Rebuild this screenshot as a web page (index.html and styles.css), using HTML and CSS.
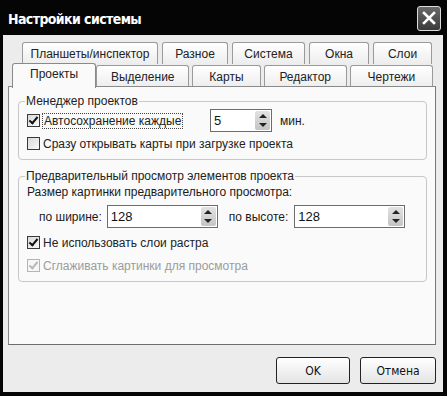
FILE: index.html
```html
<!DOCTYPE html>
<html lang="ru">
<head>
    <meta charset="UTF-8">
    <title>Настройки системы</title>
    <link rel="stylesheet" href="styles.css">
</head>
<body>
    <div class="window">
        <div class="title-bar">
            <span class="title">Настройки системы</span>
            <span class="close-btn">
                <svg width="14" height="14" viewBox="0 0 14 14"><path d="M2 2 L12 12 M12 2 L2 12" stroke="#fff" stroke-width="2.6" stroke-linecap="square"/></svg>
            </span>
        </div>
        <div class="client">
            <div class="tabs">
                <div class="tab-row back">
                    <div class="tab w-plan">Планшеты/инспектор</div>
                    <div class="tab w-misc">Разное</div>
                    <div class="tab w-sys">Система</div>
                    <div class="tab w-win">Окна</div>
                    <div class="tab w-layers">Слои</div>
                </div>
                <div class="tab-row front">
                    <div class="tab active w-proj">Проекты</div>
                    <div class="tab w-sel">Выделение</div>
                    <div class="tab w-maps">Карты</div>
                    <div class="tab w-edit">Редактор</div>
                    <div class="tab w-draw">Чертежи</div>
                </div>
            </div>
            <div class="panel">
                <fieldset class="group group-manager">
                    <legend>Менеджер проектов</legend>
                    <div class="row">
                        <label class="check autosave">
                            <span class="box checked"></span>
                            <span class="focus">Автосохранение каждые</span>
                        </label>
                        <div class="spin spin-small">
                            <span class="spin-value">5</span>
                            <span class="spin-btns"><span class="arr up"></span><span class="arr down"></span></span>
                        </div>
                        <span class="unit">мин.</span>
                    </div>
                    <label class="check">
                        <span class="box"></span>
                        <span>Сразу открывать карты при загрузке проекта</span>
                    </label>
                </fieldset>

                <fieldset class="group group-preview">
                    <legend>Предварительный просмотр элементов проекта</legend>
                    <div class="caption">Размер картинки предварительного просмотра:</div>
                    <div class="row size-row">
                        <span class="field-label">по ширине:</span>
                        <div class="spin spin-wide">
                            <span class="spin-value">128</span>
                            <span class="spin-btns"><span class="arr up"></span><span class="arr down"></span></span>
                        </div>
                        <span class="field-label second">по высоте:</span>
                        <div class="spin spin-wide">
                            <span class="spin-value">128</span>
                            <span class="spin-btns"><span class="arr up"></span><span class="arr down"></span></span>
                        </div>
                    </div>
                    <label class="check">
                        <span class="box checked"></span>
                        <span>Не использовать слои растра</span>
                    </label>
                    <label class="check disabled">
                        <span class="box checked"></span>
                        <span>Сглаживать картинки для просмотра</span>
                    </label>
                </fieldset>
            </div>
            <div class="buttons">
                <button class="btn">OK</button>
                <button class="btn">Отмена</button>
            </div>
        </div>
    </div>
</body>
</html>
```

FILE: styles.css
```css
/* Dialog frame */
body {
    margin: 0;
    background: #000;
    font-family: 'Liberation Sans', Arial, sans-serif;
    font-size: 12px;
    color: #1a1a1a;
}

.window {
    width: 447px;
    height: 396px;
    box-sizing: border-box;
    background: #050505;
    padding: 0 4px 4px 3px;
    display: flex;
    flex-direction: column;
}

.title-bar {
    height: 35px;
    display: flex;
    align-items: center;
    justify-content: space-between;
    padding: 0 2px 0 5px;
}

.title {
    color: #fff;
    font-family: 'DejaVu Sans Condensed', 'DejaVu Sans', sans-serif;
    font-weight: bold;
    font-size: 14px;
    letter-spacing: -0.6px;
    margin-top: 2px;
}

.close-btn {
    width: 22px;
    height: 23px;
    border: 1px solid #ddd;
    border-radius: 3px;
    background: linear-gradient(#6a6a6a, #3a3a3a);
    display: flex;
    align-items: center;
    justify-content: center;
    margin-top: 1px;
}

.client {
    flex: 1;
    background: #ececec;
    display: flex;
    flex-direction: column;
    padding: 7px 7px 0 5px;
}

/* Tabs */
.tabs {
    display: flex;
    flex-direction: column;
}

.tab-row {
    display: flex;
    height: 22px;
}

.tab-row.back {
    padding-left: 14px;
    gap: 4px;
}

.tab-row.front {
    padding-left: 4px;
    margin-top: 1px;
}

.tab {
    box-sizing: border-box;
    height: 22px;
    border: 1px solid #9a9a9a;
    border-bottom: none;
    border-radius: 3px 3px 0 0;
    background: linear-gradient(#ffffff, #ededed);
    display: flex;
    align-items: center;
    justify-content: center;
    font-size: 12px;
    color: #222;
}

.front .tab {
    margin-right: 3px;
}

.tab.active {
    height: 25px;
    margin-top: -2px;
    background: #fafafa;
    position: relative;
    z-index: 1;
    margin-right: 0;
    border-color: #8a8a8a;
    align-items: flex-start;
    padding-top: 3px;
}

.w-plan { width: 136px; }
.w-misc { width: 66px; }
.w-sys { width: 73px; }
.w-win { width: 60px; }
.w-layers { width: 59px; }
.w-proj { width: 85px; }
.w-sel { width: 94px; }
.w-maps { width: 69px; }
.w-edit { width: 84px; }
.w-draw { width: 84px; }

/* Page */
.panel {
    box-sizing: border-box;
    height: 259px;
    margin-top: -1px;
    background: #fafafa;
    border: 1px solid #8a8a8a;
    border-right-color: #777;
    border-bottom-color: #6d6d6d;
    padding: 7px 8px 0 9px;
}

.group {
    margin: 0;
    padding: 0 0 0 8px;
    border: 1px solid #c8c8c8;
    border-radius: 4px;
}

.group legend {
    padding: 0 1px;
    margin-left: -2px;
    font-size: 12px;
    color: #222;
}

.group-manager {
    height: 66px;
    box-sizing: border-box;
}

.group-preview {
    margin-top: 9px;
    height: 113px;
    box-sizing: border-box;
}

.row {
    display: flex;
    align-items: center;
}

.check {
    display: flex;
    align-items: center;
    gap: 3px;
    height: 19px;
    font-size: 12px;
    color: #222;
}

.check.autosave {
    width: 160px;
}

.check.disabled {
    color: #9c9c9c;
}

.box {
    box-sizing: border-box;
    width: 13px;
    height: 13px;
    border: 1px solid #3a3a3a;
    background: linear-gradient(135deg, #d8d8d8, #fbfbfb);
    position: relative;
}

.box.checked::after {
    content: '';
    position: absolute;
    left: 3px;
    top: 0px;
    width: 3px;
    height: 7px;
    border: solid #111;
    border-width: 0 2px 2px 0;
    transform: rotate(40deg);
}

.disabled .box {
    border-color: #b4b4b4;
    background: #f6f6f6;
}

.disabled .box.checked::after {
    border-color: #b8b8b8;
}

.focus {
    outline: 1px dotted #444;
    padding: 0 1px;
}

/* Spin boxes */
.spin {
    box-sizing: border-box;
    height: 23px;
    border: 1px solid #6c6c6c;
    background: #fff;
    display: flex;
    align-items: center;
    justify-content: space-between;
    padding: 1px 1px 1px 3px;
}

.spin-value {
    font-size: 13px;
    color: #111;
}

.spin-small {
    width: 62px;
    margin-left: 23px;
}

.spin-wide {
    width: 111px;
}

.spin-btns {
    width: 15px;
    height: 19px;
    background: linear-gradient(#e2e2e2, #c4c4c4);
    border-radius: 2px;
    display: flex;
    flex-direction: column;
    align-items: center;
    justify-content: space-around;
    padding: 1px 0;
    box-sizing: border-box;
}

.arr {
    width: 0;
    height: 0;
    border-left: 4px solid transparent;
    border-right: 4px solid transparent;
}

.arr.up {
    border-bottom: 4px solid #222;
}

.arr.down {
    border-top: 4px solid #222;
}

.unit {
    margin-left: 8px;
    font-size: 12px;
}

.row + .check {
    margin-top: 2px;
}

.group-manager .row {
    height: 23px;
    margin-top: 1px;
}

.caption {
    font-size: 12px;
    margin-top: 2px;
}

.size-row {
    margin: 6px 0 5px 12px;
}

.field-label {
    font-size: 12px;
    margin-right: 5px;
}

.field-label.second {
    margin-left: 11px;
    margin-right: 6px;
}

.group-preview .check + .check {
    margin-top: 4px;
}

/* Buttons */
.buttons {
    display: flex;
    justify-content: flex-end;
    gap: 10px;
    padding: 12px 0 0 0;
}

.btn {
    box-sizing: border-box;
    height: 27px;
    width: 74px;
    border: 1px solid #222;
    border-radius: 3px;
    background: linear-gradient(#ffffff, #e4e4e4);
    font-family: 'DejaVu Sans Condensed', 'DejaVu Sans', sans-serif;
    font-size: 12px;
    color: #111;
}

.btn + .btn {
    width: 76px;
}
```
